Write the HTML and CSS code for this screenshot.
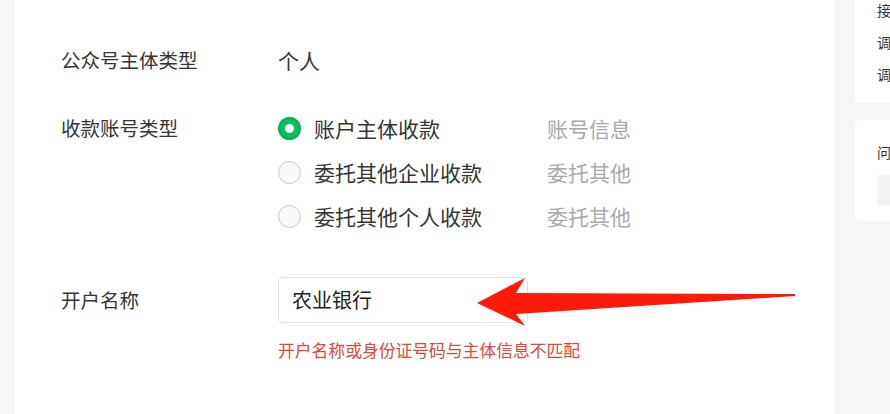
FILE: index.html
```html
<!DOCTYPE html>
<html lang="zh-CN">
<head>
    <meta charset="UTF-8">
    <title>收款账号设置</title>
    <link rel="stylesheet" href="styles.css">
</head>
<body>
    <div class="panel">
        <div class="form-row row-type">
            <div class="form-label">公众号主体类型</div>
            <div class="form-value">个人</div>
        </div>

        <div class="form-row row-account">
            <div class="form-label">收款账号类型</div>
            <div class="options">
                <label class="option">
                    <span class="radio checked"></span>
                    <span class="option-text">账户主体收款</span>
                    <span class="option-hint">账号信息</span>
                </label>
                <label class="option">
                    <span class="radio"></span>
                    <span class="option-text">委托其他企业收款</span>
                    <span class="option-hint">委托其他</span>
                </label>
                <label class="option">
                    <span class="radio"></span>
                    <span class="option-text">委托其他个人收款</span>
                    <span class="option-hint">委托其他</span>
                </label>
            </div>
        </div>

        <div class="form-row row-name">
            <div class="form-label">开户名称</div>
            <div class="field">
                <div class="input">农业银行</div>
                <div class="error">开户名称或身份证号码与主体信息不匹配</div>
            </div>
        </div>
    </div>

    <div class="side">
        <div class="side-card">
            <div class="side-line">接</div>
            <div class="side-line">调</div>
            <div class="side-line">调</div>
        </div>
        <div class="side-card second">
            <div class="side-line">问</div>
            <div class="side-input"></div>
        </div>
    </div>

    <!-- annotation arrow drawn over the screenshot -->
    <svg class="arrow" width="890" height="414" viewBox="0 0 890 414">
        <polygon fill="#ff1a0a" points="477,303 525,278 516,293 795,294 795,296 516,314 525,326"/>
    </svg>
</body>
</html>
```

FILE: styles.css
```css
body {
    margin: 0;
    height: 414px;
    overflow: hidden;
    background-color: #f6f6f6;
    font-family: "Noto Sans CJK SC", "Liberation Sans", sans-serif;
    color: #353535;
    display: flex;
    position: relative;
}

.panel {
    margin-left: 15px;
    width: 774px;
    flex-shrink: 0;
    background-color: #fff;
    padding: 46px 0 0 46px;
}

.form-row {
    display: grid;
    grid-template-columns: 217px 1fr;
    font-size: 21px;
}

.form-label {
    font-size: 19.5px;
}

.row-type {
    line-height: 28px;
    margin-bottom: 32px;
}

.row-account {
    margin-bottom: 39px;
}

.row-account .form-label {
    line-height: 44px;
}

.option {
    display: flex;
    align-items: center;
    height: 44px;
}

.radio {
    width: 23px;
    height: 23px;
    box-sizing: border-box;
    border-radius: 50%;
    border: 1.5px solid #c9c9c9;
    background-color: #f8f9fb;
    margin-right: 13px;
    flex-shrink: 0;
    display: flex;
    align-items: center;
    justify-content: center;
}

.radio.checked {
    background-color: #07c160;
    border: 2px solid #06ad56;
}

.radio.checked::after {
    content: '';
    width: 9px;
    height: 9px;
    border-radius: 50%;
    background-color: #fff;
}

.option-text {
    width: 233px;
}

.option-hint {
    color: #a9a9a9;
}

.row-name .form-label {
    line-height: 46px;
}

.input {
    width: 250px;
    height: 46px;
    box-sizing: border-box;
    border: 1px solid #e0e0e0;
    border-radius: 5px;
    padding-left: 13px;
    line-height: 44px;
    font-size: 20px;
    color: #222;
}

.error {
    margin-top: 15px;
    font-size: 16.8px;
    line-height: 24px;
    color: #e64340;
}

.side {
    margin-left: 20px;
    margin-top: -26px;
    width: 280px;
    flex-shrink: 0;
}

.side-card {
    background-color: #fff;
    border-radius: 4px;
    padding: 20px 0 13px 22px;
    font-size: 14px;
    color: #333;
    white-space: nowrap;
}

.side-line {
    line-height: 32px;
}

.side-card.second {
    margin-top: 17px;
    padding-top: 22px;
    padding-bottom: 16px;
}

.second .side-line {
    line-height: 20px;
}

.side-input {
    margin-top: 13px;
    height: 30px;
    background-color: #f3f3f3;
    border-radius: 4px;
}

.arrow {
    position: absolute;
    left: 0;
    top: 0;
    pointer-events: none;
}
```
